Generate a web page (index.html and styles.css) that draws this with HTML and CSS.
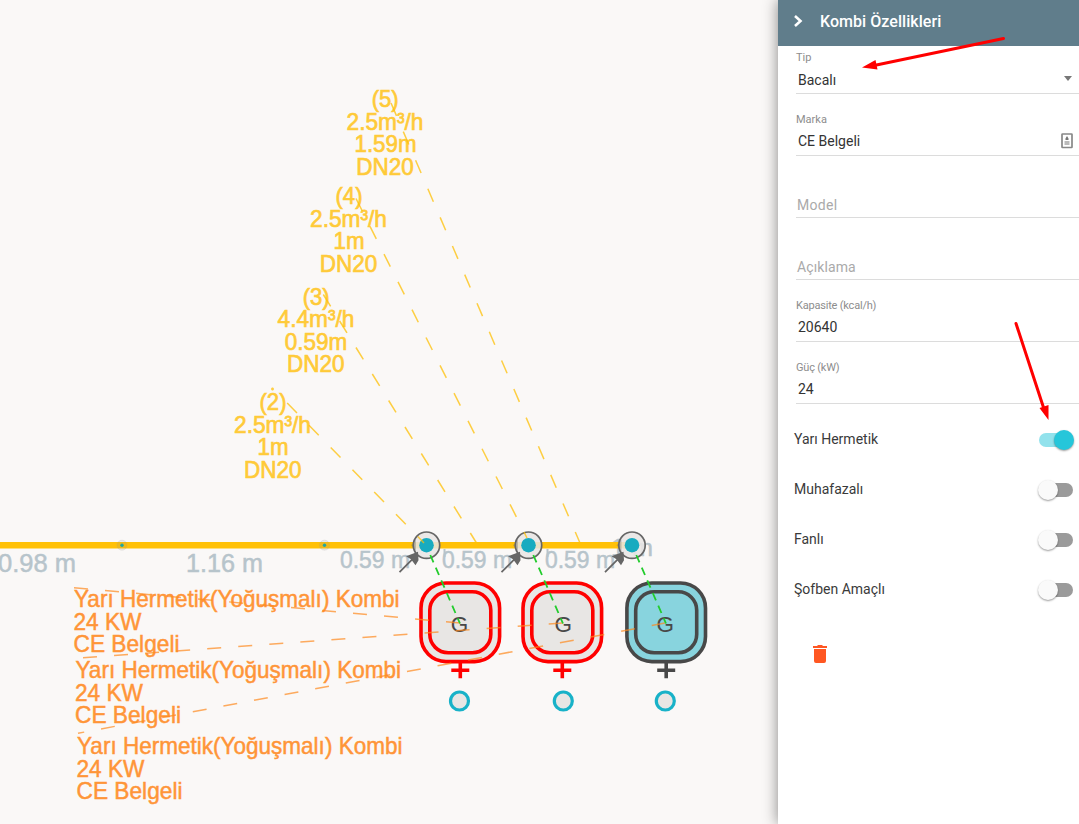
FILE: index.html
```html
<!DOCTYPE html>
<html lang="tr">
<head>
<meta charset="utf-8">
<title>Kombi Özellikleri</title>
<link rel="stylesheet" href="styles.css">
</head>
<body>
<div class="app">
<main class="canvas">
<svg class="drawing" width="778" height="824" viewBox="0 0 778 824">
  <defs>
    <g id="valve">
      <circle class="valve-ring" r="13.2"/>
      <path class="valve-arrow" d="M-27 27L-12 12"/>
      <path class="valve-head" d="M-8.500 6.500L-20.500 11L-15.500 14L-11 20L-8 15Z"/>
      <path class="valve-side" d="M-15.500 0l5-6v12z"/>
      <circle class="valve-dot" r="7.300"/>
    </g>
    <g id="boiler">
      <rect class="boiler-body" x="-39.300" y="-39.300" width="78.600" height="78.600" rx="25"/>
      <rect class="boiler-body" x="-30.500" y="-30.500" width="61" height="61" rx="18.500"/>
      <path d="M0 40v16M-9 48h18"/>
    </g>
  </defs>

  <g class="lengths">
    <text x="-2" y="571.500" font-size="25.500" textLength="78" lengthAdjust="spacingAndGlyphs">0.98 m</text>
    <text x="186" y="571.500" font-size="25.500" textLength="77" lengthAdjust="spacingAndGlyphs">1.16 m</text>
    <text x="340" y="568" textLength="70" lengthAdjust="spacingAndGlyphs">0.59 m</text>
    <text x="442" y="568" textLength="70" lengthAdjust="spacingAndGlyphs">0.59 m</text>
    <text x="545" y="568" textLength="70" lengthAdjust="spacingAndGlyphs">0.59 m</text>
    <text x="611" y="556" textLength="42" lengthAdjust="spacingAndGlyphs">1 m</text>
    <path class="length-edge" d="M444.500 549v8M547.500 549v8"/>
  </g>

  <path class="pipe" d="M0 545.2H632"/>
  <g class="joints">
    <circle cx="122" cy="545.2" r="5"/><circle cx="324.500" cy="545.2" r="5"/>
    <circle class="joint-dot" cx="122" cy="545.2" r="1.700"/><circle class="joint-dot" cx="324.500" cy="545.2" r="1.700"/>
  </g>

  <g class="flow-text">
    <text x="385.200" y="107.300" textLength="27" lengthAdjust="spacingAndGlyphs">(5)</text><text x="385" y="129.800" textLength="77" lengthAdjust="spacingAndGlyphs">2.5m³/h</text><text x="385.500" y="152.300" textLength="62" lengthAdjust="spacingAndGlyphs">1.59m</text><text x="385" y="174.800" textLength="57.500" lengthAdjust="spacingAndGlyphs">DN20</text>
    <text x="349" y="204.300" textLength="27" lengthAdjust="spacingAndGlyphs">(4)</text><text x="348.500" y="226.800" textLength="77" lengthAdjust="spacingAndGlyphs">2.5m³/h</text><text x="349" y="249.300" textLength="31" lengthAdjust="spacingAndGlyphs">1m</text><text x="348.500" y="271.800" textLength="57.500" lengthAdjust="spacingAndGlyphs">DN20</text>
    <text x="316.200" y="304.600" textLength="27" lengthAdjust="spacingAndGlyphs">(3)</text><text x="316" y="327.100" textLength="77" lengthAdjust="spacingAndGlyphs">4.4m³/h</text><text x="316" y="349.600" textLength="62.500" lengthAdjust="spacingAndGlyphs">0.59m</text><text x="315.700" y="372.100" textLength="57.500" lengthAdjust="spacingAndGlyphs">DN20</text>
    <text x="273" y="410.300" textLength="27" lengthAdjust="spacingAndGlyphs">(2)</text><text x="272.500" y="432.800" textLength="77" lengthAdjust="spacingAndGlyphs">2.5m³/h</text><text x="273" y="455.300" textLength="31" lengthAdjust="spacingAndGlyphs">1m</text><text x="272.700" y="477.800" textLength="57.500" lengthAdjust="spacingAndGlyphs">DN20</text>
  </g>

  <use href="#valve" x="426.500" y="545.2"/>
  <use href="#valve" x="528.500" y="545.2"/>
  <use href="#valve" x="632" y="545.2"/>

  <use class="boiler" href="#boiler" x="460.300" y="622.300"/>
  <use class="boiler" href="#boiler" x="562.300" y="622.300"/>
  <use class="boiler boiler-selected" href="#boiler" x="666.200" y="622.300"/>

  <g class="flue">
    <circle cx="459.500" cy="701" r="9"/><circle cx="563.300" cy="701" r="9"/><circle cx="665.300" cy="701" r="9"/>
  </g>
  <g class="boiler-letter">
    <text x="459.500" y="631.500">G</text><text x="563.200" y="631.500">G</text><text x="665.200" y="631.500">G</text>
  </g>

  <g class="boiler-text">
    <text x="74" y="607.200" textLength="325.500" lengthAdjust="spacingAndGlyphs">Yarı Hermetik(Yoğuşmalı) Kombi</text><text x="73.500" y="629.700" textLength="68" lengthAdjust="spacingAndGlyphs">24 KW</text><text x="73.500" y="652.200" textLength="106" lengthAdjust="spacingAndGlyphs">CE Belgeli</text>
    <text x="75.500" y="678.200" textLength="325.500" lengthAdjust="spacingAndGlyphs">Yarı Hermetik(Yoğuşmalı) Kombi</text><text x="75" y="700.700" textLength="68" lengthAdjust="spacingAndGlyphs">24 KW</text><text x="75" y="723.200" textLength="106" lengthAdjust="spacingAndGlyphs">CE Belgeli</text>
    <text x="77" y="754.200" textLength="325.500" lengthAdjust="spacingAndGlyphs">Yarı Hermetik(Yoğuşmalı) Kombi</text><text x="76.500" y="776.700" textLength="68" lengthAdjust="spacingAndGlyphs">24 KW</text><text x="76.500" y="799.200" textLength="106" lengthAdjust="spacingAndGlyphs">CE Belgeli</text>
  </g>

  <g class="leader leader-flow">
    <path d="M391 103L580 543"/>
    <path d="M356 198.500L527 538"/>
    <path d="M323.300 294.500L476.500 543"/>
    <path d="M287.200 403L424 543"/>
    <path d="M272.500 387.500v3M271 389h3"/>
  </g>
  <g class="leader leader-boiler">
    <path d="M74 587.700L460 623"/>
    <path d="M83 657.700L563 623"/>
    <path class="leader-last" d="M78 733.300L665 623"/>
  </g>
  <g class="link">
    <path d="M430.300 555L460 623.500"/><path d="M533.300 555L563 623.500"/><path d="M636.300 555L666 623.500"/>
  </g>
</svg>
</main>

<aside class="panel">
  <header class="panel-head">
    <svg class="chevron" width="12" height="14" viewBox="0 0 12 14"><path d="M3 2L8.500 7L3 12"/></svg>
    <h1 class="title">Kombi Özellikleri</h1>
  </header>
  <section class="fields">
    <div class="field field-first"><label class="caption">Tip</label><div class="value">Bacalı</div><i class="caret"></i></div>
    <div class="field"><label class="caption">Marka</label><div class="value">CE Belgeli</div>
      <svg class="autofill" width="12" height="16" viewBox="0 0 12 16"><rect x="1" y="1" width="10" height="13.500" rx=".5"/><path d="M6 3l1.500 2.500v1.500h-3V5.500zM3.500 8.500h5v1h-5zM3.500 10.500h5v1h-5z"/></svg></div>
    <div class="field"><div class="placeholder">Model</div></div>
    <div class="field"><div class="placeholder placeholder-tight">Açıklama</div></div>
    <div class="field"><label class="caption caption-tight">Kapasite (kcal/h)</label><div class="value">20640</div></div>
    <div class="field"><label class="caption caption-tight">Güç (kW)</label><div class="value">24</div></div>
  </section>
  <section class="switches">
    <div class="switch-row"><span>Yarı Hermetik</span><i class="switch switch-on"></i></div>
    <div class="switch-row"><span>Muhafazalı</span><i class="switch"></i></div>
    <div class="switch-row"><span>Fanlı</span><i class="switch"></i></div>
    <div class="switch-row"><span>Şofben Amaçlı</span><i class="switch"></i></div>
  </section>
  <svg class="trash" width="14" height="18" viewBox="0 0 14 18"><path d="M1 4h12v12q0 2-2 2H3q-2 0-2-2zM0 1h4l1-1h4l1 1h4v2H0z"/></svg>
</aside>

<svg class="callouts" width="1079" height="824" viewBox="0 0 1079 824">
  <path class="callout-line" d="M1003.500 38.500L874 65.500M1016 323.500L1044 409"/>
  <path class="callout-tip" d="M862 67.500L875.500 60L877.500 69.500ZM1048.500 420L1039.500 408L1048.500 405Z"/>
</svg>
</div>
</body>
</html>
```
FILE: styles.css
```css
* { box-sizing: border-box; }
body { margin: 0; overflow: hidden; font-family: Roboto, sans-serif; }
.app { position: relative; display: flex; width: 1079px; height: 824px; background: #faf8f7; }
.canvas { flex: none; width: 778px; }
.drawing { display: block; font-family: "Liberation Sans", Arial, sans-serif; }

.lengths { fill: #b7c4cb; stroke: #b7c4cb; stroke-width: .5; font-size: 24.500px; }
.length-edge { stroke-width: 2; }
.pipe { stroke: #ffc107; stroke-width: 6.500; fill: none; }
.joints { fill: #8882; stroke: #9993; }
.joints .joint-dot { fill: #22a6a0; stroke: none; }
.flow-text { fill: #ffca38; stroke: #ffca38; stroke-width: .7; font-size: 23.800px; text-anchor: middle; }
.boiler-text { fill: #ff9538; stroke: #ff9538; stroke-width: .5; font-size: 23.800px; }

.valve-ring { fill: #e8e6e4dd; stroke: #666; stroke-width: 1.700; }
.valve-dot { fill: #18abc0; }
.valve-arrow { stroke: #666; stroke-width: 1.700; }
.valve-head { fill: #666; }
.valve-side { fill: #6665; }

.boiler { fill: none; stroke: #f00; stroke-width: 3.600; }
.boiler-body { fill: var(--body, #e8e6e4); }
.boiler-selected { --body: #88d4de; stroke: #484848; }
.boiler-letter { fill: #484848; font-size: 22.500px; text-anchor: middle; }
.flue { fill: #e8e6e4; stroke: #18b2c8; stroke-width: 3.200; }

.leader { fill: none; stroke-width: 1.500; stroke-dasharray: 14 17.130; }
.leader-flow { stroke: #ffc107; opacity: .75; }
.leader-boiler { stroke: #ff8a1e; opacity: .7; }
.leader-last { stroke-dashoffset: 7.700; }
.link { stroke: #22cc2c; stroke-width: 1.800; stroke-dasharray: 8 5.800; }

.panel { flex: none; width: 301px; overflow: hidden; background: #fff; box-shadow: 0 0 14px #0007; clip-path: inset(0 0 0 -20px); color: #3a3a3a; }
.panel-head { display: flex; align-items: center; gap: 12px; height: 46px; padding: 0 0 4px 14px; background: #607d8b; }
.chevron { margin-right: 4px; fill: none; stroke: #fff; stroke-width: 2.600; }
.title { margin: 0; color: #fff; font-size: 16px; font-weight: 500; letter-spacing: .05px; }

.fields { padding-left: 18px; }
.field { position: relative; display: flex; flex-direction: column; justify-content: flex-end; height: 62px; border-bottom: 1px solid #dcdcdc; }
.field-first { height: 48px; }
.caption { height: 13px; color: #8d8d8d; font-size: 11px; line-height: 13px; }
.caption-tight { letter-spacing: -.2px; }
.value { height: 29px; padding: 5px 0 0 2px; color: #333; font-size: 14px; line-height: 20px; }
.field-first .value { padding-top: 6px; }
.placeholder { height: 23px; padding-left: 1px; color: #aaa; font-size: 14px; line-height: 22px; letter-spacing: .3px; }
.placeholder-tight { letter-spacing: .1px; }
.caret { position: absolute; right: 7px; bottom: 12px; border: 4.500px solid transparent; border-top: 5px solid #777; border-bottom: 0; }
.autofill { position: absolute; right: 6px; bottom: 6px; fill: #777; }
.autofill rect { fill: none; stroke: #888; stroke-width: 1.700; }

.switches { padding: 10px 6px 0 16px; }
.switch-row { display: flex; align-items: center; justify-content: space-between; height: 50px; font-size: 14px; }
.switch { display: flex; align-items: center; width: 34px; height: 14px; margin-top: 1px; border-radius: 7px; background: #9b9b9b; }
.switch::before { content: ""; width: 20px; height: 20px; margin-left: -1px; border-radius: 50%; background: #fafafa; box-shadow: 0 1px 2px #0006; flex: none; }
.switch-on { background: #92e2ec; }
.switch-on::before { margin-left: 15px; background: #26c6da; }
.trash { display: block; margin: 31px 0 0 35px; fill: #ff5722; }

.callouts { position: absolute; inset: 0; pointer-events: none; }
.callout-line { stroke: #f00; stroke-width: 3; stroke-linecap: round; }
.callout-tip { fill: #f00; }
```
